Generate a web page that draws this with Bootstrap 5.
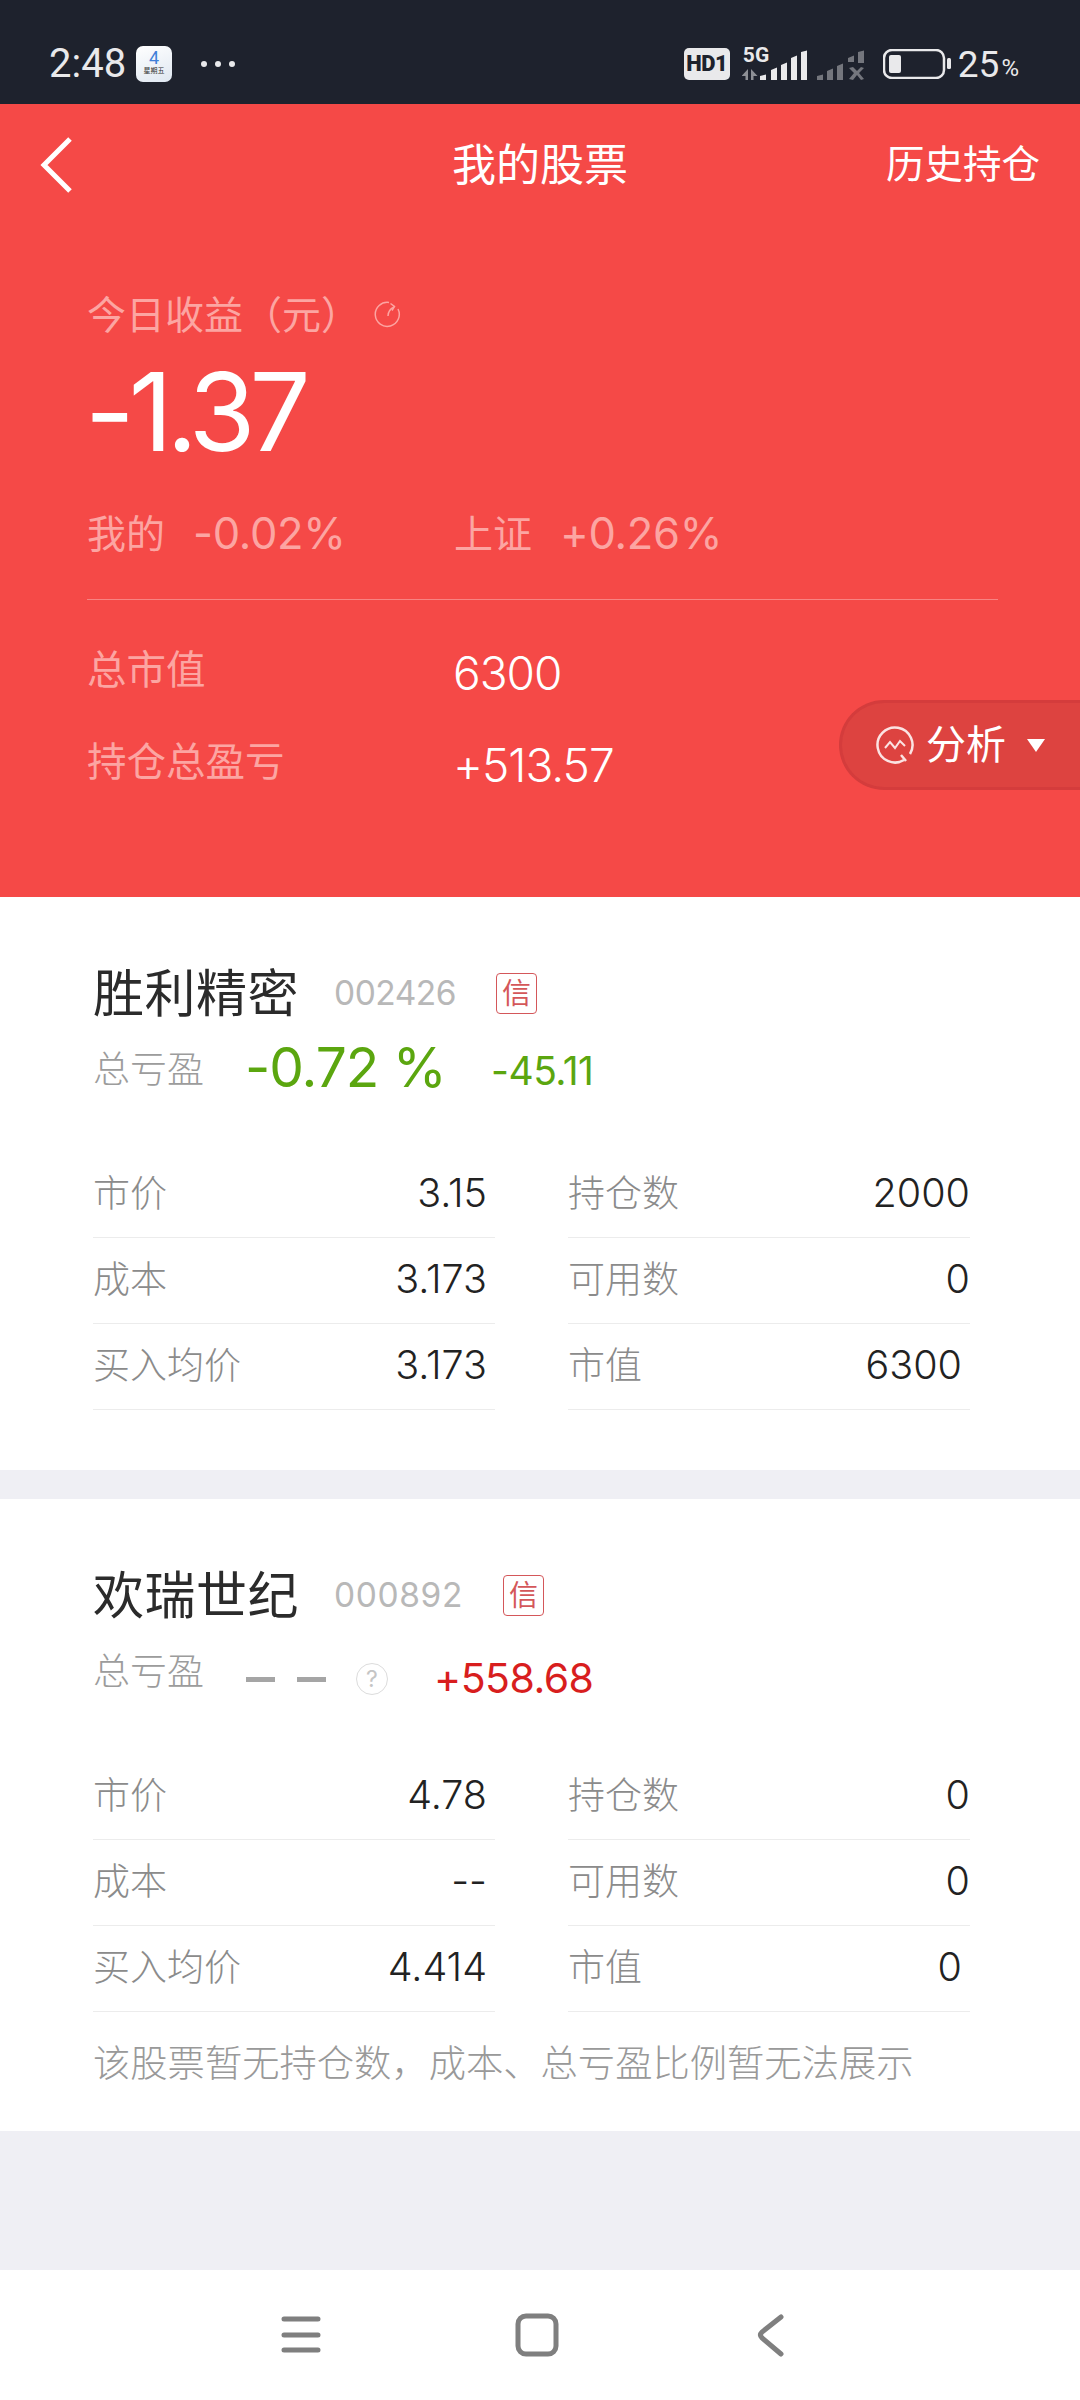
<!DOCTYPE html>
<html lang="zh-CN">
<head>
  <meta charset="UTF-8" />
  <meta name="viewport" content="width=device-width, initial-scale=1.0" />
  <title>我的股票</title>
  <link href="https://cdn.jsdelivr.net/npm/bootstrap@5.3.3/dist/css/bootstrap.min.css" rel="stylesheet">
  <style>
    body {
      width: 1080px;
      height: 2400px;
      overflow: hidden;
      background-color: #efeff4;
      font-family: Inter, "Noto Sans CJK SC", sans-serif;
      color: #222;
    }
    .phone-status {
      height: 104px;
      padding: 24px 61px 0 49px;
      background: #1e222d;
      color: #e9e9eb;
      font-family: Roboto, "Noto Sans CJK SC", sans-serif;
    }
    .clock { font-size: 40px; line-height: 1; width: 87px; }
    .cal-icon {
      width: 36px;
      height: 36px;
      border-radius: 7px;
      background: linear-gradient(160deg, #fff, #dfe7f1);
      line-height: 1;
    }
    .cal-num { font-size: 18px; color: #3f7fd8; margin-top: 3px; }
    .cal-day { font-size: 7px; color: #333; margin-top: 1px; }
    .more-dots { margin-left: 28px; }
    .hd-tag {
      width: 46px;
      height: 32px;
      border-radius: 5px;
      background: #e9e9eb;
      color: #1e222d;
      font-size: 22px;
      font-weight: 900;
      letter-spacing: -.5px;
      line-height: 1;
    }
    .signal-box { position: relative; margin-left: 12px; }
    .net-type { position: absolute; left: 1px; top: -2px; font-size: 21px; font-weight: 700; line-height: 1; }
    .batt-icon { margin-left: 19px; }
    .batt-num { font-size: 37px; line-height: 1; margin-left: 6px; }
    .batt-pct { font-size: 24px; line-height: 1; margin-left: 2px; margin-top: 8px; }

    .red-head {
      position: relative;
      height: 793px;
      background: #f54947;
      color: #fff;
    }
    .top-bar { height: 122px; padding: 0 40px 0 36px; position: relative; }
    .top-title { font-size: 44px; }
    .top-link { font-size: 38.5px; }
    .back-btn { width: 40px; }
    .sum-wrap { padding: 0 82px 0 87px; }
    .sum-label { font-size: 39px; color: #fca5a2; line-height: 1; margin-top: 66px; height: 44px; }
    .refresh-icon { margin-left: 14px; }
    .sum-big { font-size: 108px; line-height: 1; letter-spacing: -6px; margin-top: 22px; margin-left: -2px; height: 108px; }
    .sum-cmp { color: #fca5a2; line-height: 1; margin-top: 46px; padding-bottom: 43px; border-bottom: 1px solid rgba(255,255,255,.32); }
    .cmp-block { width: 367px; gap: 28px; font-size: 39px; }
    .cmp-num { font-size: 43.5px; letter-spacing: -.3px; }
    .sum-rows { margin-top: 25px; }
    .sum-row { height: 92px; }
    .sum-key { width: 366px; font-size: 39.5px; color: #fca5a2; }
    .sum-val { font-size: 46px; font-weight: 300; letter-spacing: -1px; padding-top: 6px; }
    .analyze-pill {
      position: absolute;
      right: 0;
      top: 596px;
      width: 241px;
      height: 90px;
      padding-left: 33px;
      gap: 11px;
      background: #dd4340;
      border: 3px solid #d43c3c;
      border-right: 0;
      border-radius: 45px 0 0 45px;
      font-size: 40px;
    }
    .pill-arrow {
      width: 0;
      height: 0;
      margin-left: 10px;
      border-left: 9px solid transparent;
      border-right: 9px solid transparent;
      border-top: 13px solid #fff;
    }

    .stock-card { background: #fff; padding: 0 110px 0 93px; }
    .stock-one { height: 573px; padding-top: 71px; }
    .stock-two { height: 632px; margin-top: 29px; padding-top: 71px; }
    .stock-name { font-size: 51px; line-height: 1; color: #2b2b2b; letter-spacing: .5px; }
    .stock-code { font-size: 33.5px; color: #b8b8b8; margin-left: 35px; line-height: 1; letter-spacing: -.5px; }
    .stock-code-wide { letter-spacing: .6px; }
    .credit-tag {
      width: 41px;
      height: 41px;
      margin-left: 40px;
      border: 1.5px solid #d4575a;
      border-radius: 4px;
      color: #d4575a;
      font-size: 29px;
      line-height: 1;
    }
    .profit-line { height: 80px; margin-top: 8px; }
    .profit-key { width: 153px; font-size: 37px; font-weight: 300; color: #9c9c9c; padding-top: 6px; }
    .profit-pct { font-size: 55px; color: #5ba60f; line-height: 1; width: 245px; letter-spacing: -1px; margin-left: -1px; }
    .profit-amt-down { font-size: 39px; color: #5ba60f; letter-spacing: -.5px; padding-top: 8px; margin-left: 1px; }
    .profit-dash { width: 110px; gap: 22px; padding-top: 20px; }
    .dash-seg { width: 29px; height: 5px; background: #a5a5a5; }
    .help-dot {
      width: 32px;
      height: 32px;
      margin-top: 20px;
      margin-right: 46px;
      border: 1.5px solid #dcdcdc;
      border-radius: 50%;
      color: #c5c5c5;
      font-size: 23px;
      line-height: 1;
    }
    .profit-amt-up { font-size: 41px; color: #d81e1e; letter-spacing: -.5px; padding-top: 20px; }
    .data-grid { margin-top: 45px; gap: 73px; }
    .data-col { width: 402px; }
    .data-row {
      height: 86px;
      padding: 0 8px 1px 0;
      border-bottom: 1px solid #ececec;
      font-size: 39.5px;
      font-weight: 300;
    }
    .data-col-end .data-row { padding-right: 0; }
    .data-key { font-size: 37px; color: #8b8b8b; }
    .data-val { color: #222; }
    .pad-val { padding-right: 8px; }
    .stock-note { font-size: 37.3px; font-weight: 300; color: #999; margin-top: 30px; line-height: 1.2; white-space: nowrap; }

    .phone-nav { height: 130px; margin-top: 139px; background: #fff; }
  </style>
</head>
<body>
  <!-- status bar -->
  <div class="phone-status d-flex align-items-center">
    <div class="clock">2:48</div>
    <div class="cal-icon d-flex flex-column align-items-center">
      <div class="cal-num">4</div>
      <div class="cal-day">星期五</div>
    </div>
    <svg class="more-dots" width="36" height="8" viewBox="0 0 36 8"><circle cx="4" cy="4" r="3" fill="#e9e9eb"/><circle cx="18" cy="4" r="3" fill="#e9e9eb"/><circle cx="32" cy="4" r="3" fill="#e9e9eb"/></svg>
    <div class="ms-auto d-flex align-items-center">
      <div class="hd-tag d-flex align-items-center justify-content-center">HD1</div>
      <div class="signal-box">
        <div class="net-type">5G</div>
        <svg class="d-block" width="122" height="34" viewBox="740 46 122 34">
          <path d="M746 68v11h-2.500v-4h-4zM749 68v11h2.500v-4h4z" fill="#8d8f95"/>
          <path d="M758 79v-4l6-1.500v5.500zM769 79v-10l6-2.500v12.500zM779 79v-15l6-2.500v17.500zM789 79v-22l6-2.500v24.500zM799 79v-28l6-1.500v29.500z" fill="#e9e9eb"/>
          <g fill="#74767d">
            <path d="M815 79v-4l6-1.500v5.500zM825 79v-9l6-2.500v11.500zM835 79v-14l6-2.500v16.500zM846 61v-4l6-2.500v6.500zM856 62v-11l6-1.500v12.500z"/>
            <path d="M847 67l4-1 4 4 4-4 3 1-5 5 5 6-3 1-4-5-4 5-4-1 5-6z"/>
          </g>
        </svg>
      </div>
      <svg class="batt-icon" width="69" height="30" viewBox="881 49 69 30">
        <rect x="882" y="50" width="60" height="28" rx="8" fill="none" stroke="#e9e9eb" stroke-width="2.500"/>
        <rect x="887" y="55" width="12" height="18" rx="2" fill="#e9e9eb"/>
        <rect x="945" y="58" width="4" height="11" rx="1.500" fill="#e9e9eb"/>
      </svg>
      <span class="batt-num">25</span><span class="batt-pct">%</span>
    </div>
  </div>

  <!-- red summary -->
  <div class="red-head">
    <div class="top-bar d-flex align-items-center justify-content-between">
      <svg class="back-btn" width="34" height="56" viewBox="0 0 34 56"><path d="M31 2 5 28l26 26" fill="none" stroke="#fff" stroke-width="5"/></svg>
      <div class="top-title position-absolute top-50 start-50 translate-middle">我的股票</div>
      <div class="top-link">历史持仓</div>
    </div>
    <div class="sum-wrap">
      <div class="sum-label d-flex align-items-center">今日收益（元）
        <svg class="refresh-icon" width="28" height="28" viewBox="0 0 28 28" fill="none" stroke="#fca5a2" stroke-width="1.500"><path d="M24 9a12 12 0 1 1-9-6.500"/><path d="M14 16c0-4 2-7 6-9"/><path d="M16.500 3.500l4 3-2.500 4"/></svg>
      </div>
      <div class="sum-big">-1.37</div>
      <div class="sum-cmp d-flex">
        <div class="cmp-block d-flex align-items-center"><span>我的</span><span class="cmp-num">-0.02%</span></div>
        <div class="cmp-block d-flex align-items-center"><span>上证</span><span class="cmp-num">+0.26%</span></div>
      </div>
      <div class="sum-rows">
        <div class="sum-row d-flex align-items-center">
          <div class="sum-key">总市值</div>
          <div class="sum-val">6300</div>
        </div>
        <div class="sum-row d-flex align-items-center">
          <div class="sum-key">持仓总盈亏</div>
          <div class="sum-val">+513.57</div>
        </div>
      </div>
    </div>
    <div class="analyze-pill d-flex align-items-center">
      <svg width="40" height="40" viewBox="0 0 40 40" fill="none" stroke="#fbe3e2" stroke-width="2.500"><path d="M29 35A17.500 17.500 0 1 1 35 29"/><path d="M26 30l5 6"/><path d="M10 23l5-6 5 6 5-7 5 5" stroke-width="2"/></svg>
      <span>分析</span>
      <span class="pill-arrow"></span>
    </div>
  </div>

  <!-- stock one -->
  <div class="stock-card stock-one">
    <div class="d-flex align-items-center">
      <div class="stock-name">胜利精密</div>
      <div class="stock-code">002426</div>
      <div class="credit-tag d-flex align-items-center justify-content-center">信</div>
    </div>
    <div class="profit-line d-flex align-items-center">
      <div class="profit-key">总亏盈</div>
      <div class="profit-pct">-0.72 %</div>
      <div class="profit-amt-down">-45.11</div>
    </div>
    <div class="data-grid d-flex">
      <div class="data-col">
        <div class="data-row d-flex justify-content-between align-items-center"><span class="data-key">市价</span><span class="data-val">3.15</span></div>
        <div class="data-row d-flex justify-content-between align-items-center"><span class="data-key">成本</span><span class="data-val">3.173</span></div>
        <div class="data-row d-flex justify-content-between align-items-center"><span class="data-key">买入均价</span><span class="data-val">3.173</span></div>
      </div>
      <div class="data-col data-col-end">
        <div class="data-row d-flex justify-content-between align-items-center"><span class="data-key">持仓数</span><span class="data-val">2000</span></div>
        <div class="data-row d-flex justify-content-between align-items-center"><span class="data-key">可用数</span><span class="data-val">0</span></div>
        <div class="data-row d-flex justify-content-between align-items-center"><span class="data-key">市值</span><span class="data-val pad-val">6300</span></div>
      </div>
    </div>
  </div>

  <!-- stock two -->
  <div class="stock-card stock-two">
    <div class="d-flex align-items-center">
      <div class="stock-name">欢瑞世纪</div>
      <div class="stock-code stock-code-wide">000892</div>
      <div class="credit-tag d-flex align-items-center justify-content-center">信</div>
    </div>
    <div class="profit-line d-flex align-items-center">
      <div class="profit-key">总亏盈</div>
      <div class="profit-dash d-flex"><span class="dash-seg"></span><span class="dash-seg"></span></div>
      <div class="help-dot d-flex align-items-center justify-content-center">?</div>
      <div class="profit-amt-up">+558.68</div>
    </div>
    <div class="data-grid d-flex">
      <div class="data-col">
        <div class="data-row d-flex justify-content-between align-items-center"><span class="data-key">市价</span><span class="data-val">4.78</span></div>
        <div class="data-row d-flex justify-content-between align-items-center"><span class="data-key">成本</span><span class="data-val">--</span></div>
        <div class="data-row d-flex justify-content-between align-items-center"><span class="data-key">买入均价</span><span class="data-val">4.414</span></div>
      </div>
      <div class="data-col data-col-end">
        <div class="data-row d-flex justify-content-between align-items-center"><span class="data-key">持仓数</span><span class="data-val">0</span></div>
        <div class="data-row d-flex justify-content-between align-items-center"><span class="data-key">可用数</span><span class="data-val">0</span></div>
        <div class="data-row d-flex justify-content-between align-items-center"><span class="data-key">市值</span><span class="data-val pad-val">0</span></div>
      </div>
    </div>
    <div class="stock-note">该股票暂无持仓数，成本、总亏盈比例暂无法展示</div>
  </div>

  <!-- nav bar -->
  <div class="phone-nav d-flex align-items-center justify-content-center">
    <svg width="520" height="50" viewBox="280 2310 520 50" fill="none" stroke="#7f7f7f" stroke-linecap="round">
      <path d="M284 2319h34M284 2335h34M284 2350h34" stroke-width="5"/>
      <rect x="518" y="2316" width="38" height="38" rx="8" stroke-width="5"/>
      <path d="M781 2317l-19 15q-3 3 0 6l19 16" stroke-width="5"/>
    </svg>
  </div>
</body>
</html>
